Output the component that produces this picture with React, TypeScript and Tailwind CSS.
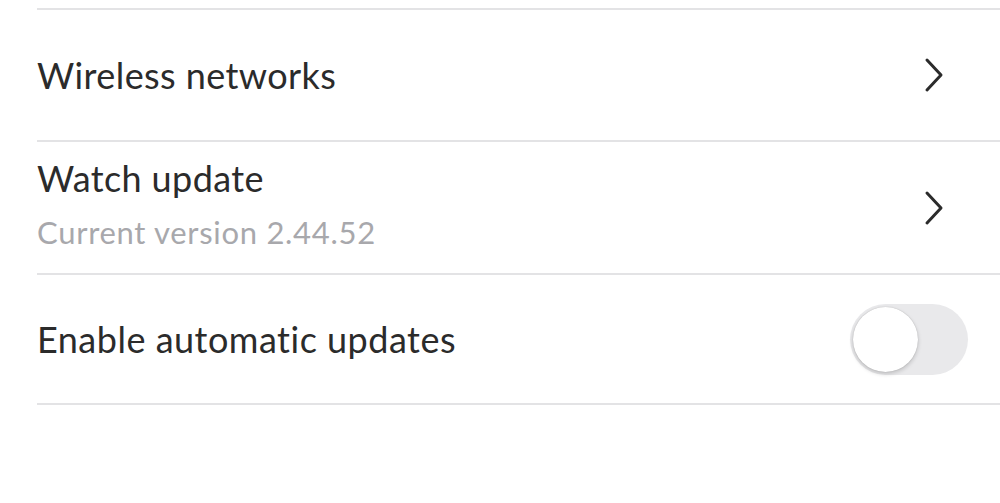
import React from "react";

function Chevron() {
  return (
    <svg width="22" height="36" viewBox="0 0 22 36" fill="none" className="shrink-0">
      <path d="M4 3 L18 18 L4 33" stroke="#2b2b2b" strokeWidth="3" strokeLinecap="round" strokeLinejoin="round" />
    </svg>
  );
}

function Toggle() {
  return (
    <div className="flex h-[71px] w-[118px] shrink-0 items-center rounded-full bg-[#e9e9eb] pl-[3px]">
      <div className="h-[65px] w-[65px] rounded-full bg-white shadow-[0_2px_4px_rgba(0,0,0,0.18),0_0_1px_rgba(0,0,0,0.25)]" />
    </div>
  );
}

export default function App() {
  return (
    <div
      className="min-h-[503px] w-[1000px] bg-white pl-[37px] pt-[8px] text-[#2b2b2b]"
      style={{ fontFamily: "Lato, 'Open Sans', sans-serif" }}
    >
      <div className="h-[2px] bg-[#e3e3e5]" />
      <div className="flex h-[130px] items-center justify-between pr-[55px]">
        <span className="text-[36px] leading-none tracking-[0.4px]">Wireless networks</span>
        <Chevron />
      </div>
      <div className="h-[2px] bg-[#e3e3e5]" />
      <div className="flex h-[131px] items-center justify-between pr-[55px]">
        <div className="flex flex-col gap-[21px] pb-[7px]">
          <span className="text-[36px] leading-none tracking-[0.4px]">Watch update</span>
          <span className="text-[31px] leading-none tracking-[0.7px] text-[#a8a8ac]">Current version 2.44.52</span>
        </div>
        <Chevron />
      </div>
      <div className="h-[2px] bg-[#e3e3e5]" />
      <div className="flex h-[128px] items-center justify-between pr-[32px]">
        <span className="text-[36px] leading-none tracking-[0.5px]">Enable automatic updates</span>
        <Toggle />
      </div>
      <div className="h-[2px] bg-[#e3e3e5]" />
    </div>
  );
}
